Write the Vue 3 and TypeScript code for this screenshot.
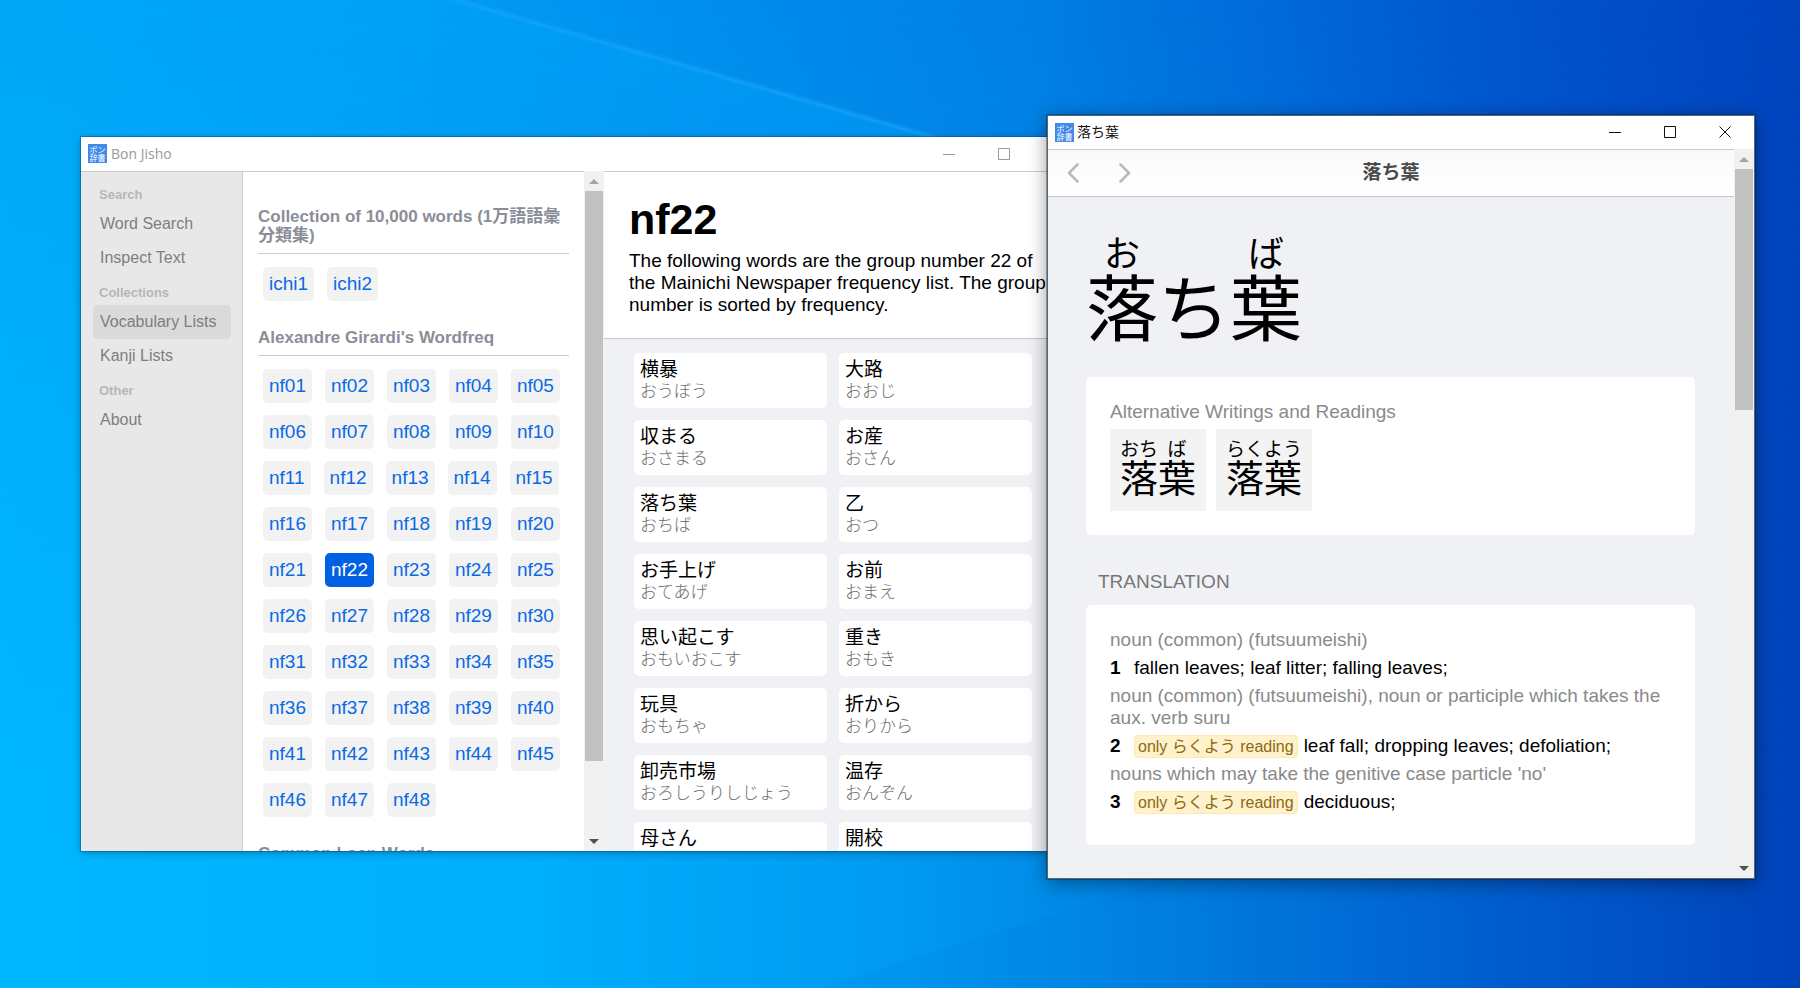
<script setup lang="ts">
import { ref } from 'vue'

interface Word {
  text: string
  reading: string
}
interface RubyPart {
  base: string
  kana?: string
}
interface Sense {
  kind: string
  only?: string
  glosses: string
}

const navGroups = [
  { label: 'Search', items: ['Word Search', 'Inspect Text'] },
  { label: 'Collections', items: ['Vocabulary Lists', 'Kanji Lists'] },
  { label: 'Other', items: ['About'] },
]
const activeNav = ref('Vocabulary Lists')

const lists = [
  { title: 'Collection of 10,000 words (1万語語彙分類集)', keys: ['ichi1', 'ichi2'] },
  {
    title: "Alexandre Girardi's Wordfreq",
    keys: Array.from({ length: 48 }, (_, i) => 'nf' + String(i + 1).padStart(2, '0')),
  },
  { title: 'Common Loan Words', keys: [] },
]
const activeList = ref('nf22')

const words: Word[] = [
  { text: '横暴', reading: 'おうぼう' },
  { text: '大路', reading: 'おおじ' },
  { text: '収まる', reading: 'おさまる' },
  { text: 'お産', reading: 'おさん' },
  { text: '落ち葉', reading: 'おちば' },
  { text: '乙', reading: 'おつ' },
  { text: 'お手上げ', reading: 'おてあげ' },
  { text: 'お前', reading: 'おまえ' },
  { text: '思い起こす', reading: 'おもいおこす' },
  { text: '重き', reading: 'おもき' },
  { text: '玩具', reading: 'おもちゃ' },
  { text: '折から', reading: 'おりから' },
  { text: '卸売市場', reading: 'おろしうりしじょう' },
  { text: '温存', reading: 'おんぞん' },
  { text: '母さん', reading: '' },
  { text: '開校', reading: '' },
]

const headword: RubyPart[] = [{ base: '落', kana: 'お' }, { base: 'ち' }, { base: '葉', kana: 'ば' }]
const alternatives: RubyPart[][] = [
  [{ base: '落', kana: 'おち' }, { base: '葉', kana: 'ば' }],
  [{ base: '落葉', kana: 'らくよう' }],
]
const senses: Sense[] = [
  { kind: 'noun (common) (futsuumeishi)', glosses: 'fallen leaves; leaf litter; falling leaves;' },
  {
    kind: 'noun (common) (futsuumeishi), noun or participle which takes the aux. verb suru',
    only: 'only らくよう reading',
    glosses: 'leaf fall; dropping leaves; defoliation;',
  },
  {
    kind: "nouns which may take the genitive case particle 'no'",
    only: 'only らくよう reading',
    glosses: 'deciduous;',
  },
]
</script>

<template>
  <div class="desktop" lang="ja">
    <svg class="wallpaper" viewBox="0 0 1800 988" preserveAspectRatio="none" aria-hidden="true">
      <defs>
        <linearGradient id="sky" x1="0" y1="0" x2="1" y2="0">
          <stop offset="0" stop-color="#00a8f8" />
          <stop offset="0.2" stop-color="#00a0f6" />
          <stop offset="0.42" stop-color="#008cec" />
          <stop offset="0.58" stop-color="#007ee4" />
          <stop offset="0.72" stop-color="#0068d8" />
          <stop offset="0.84" stop-color="#0054cd" />
          <stop offset="1" stop-color="#0044bf" />
        </linearGradient>
        <linearGradient id="low" x1="0" y1="0" x2="1" y2="0">
          <stop offset="0" stop-color="#00b7ff" />
          <stop offset="0.3" stop-color="#00aefc" />
          <stop offset="0.5" stop-color="#009af0" />
          <stop offset="0.66" stop-color="#007ee0" />
          <stop offset="0.82" stop-color="#005fd0" />
          <stop offset="1" stop-color="#0043ba" />
        </linearGradient>
        <linearGradient id="fade" x1="0" y1="0" x2="0" y2="1">
          <stop offset="0" stop-color="#000" />
          <stop offset="0.85" stop-color="#fff" />
        </linearGradient>
        <linearGradient id="beam" gradientUnits="userSpaceOnUse" x1="700" y1="70" x2="660" y2="210">
          <stop offset="0" stop-color="#0af" stop-opacity="0.3" />
          <stop offset="1" stop-color="#0af" stop-opacity="0" />
        </linearGradient>
        <mask id="lower"><rect width="1800" height="988" fill="url(#fade)" /></mask>
      </defs>
      <rect width="1800" height="988" fill="url(#sky)" />
      <rect width="1800" height="988" fill="url(#low)" mask="url(#lower)" />
      <path d="M455 0 L945 140 L945 300 L0 300 L0 0 Z" fill="url(#beam)" />
      <path d="M450 -2 L950 142" stroke="#1aa8ff" stroke-opacity="0.2" stroke-width="7" />
      <path d="M450 -2 L950 142" stroke="#2ab0ff" stroke-opacity="0.25" stroke-width="3" />
      <path d="M1170 878 L820 988 L1500 988 L1500 878 Z" fill="#0060c8" fill-opacity="0.08" />
    </svg>

    <section class="window main-window" aria-label="Bon Jisho">
      <header class="titlebar inactive">
        <svg class="logo" viewBox="0 0 19 19" aria-hidden="true">
          <rect width="19" height="19" fill="#4189e8" />
          <text x="9.5" y="8.5" text-anchor="middle">ポン</text>
          <text x="9.5" y="16.5" text-anchor="middle">辞書</text>
        </svg>
        <span class="caption">Bon Jisho</span>
        <div class="controls">
          <button type="button" aria-label="Minimize"><svg viewBox="0 0 12 12"><path d="M0 6.5H12" /></svg></button>
          <button type="button" aria-label="Maximize"><svg viewBox="0 0 12 12"><path d="M.5 .5H11.5V11.5H.5Z" /></svg></button>
          <button type="button" aria-label="Close"><svg viewBox="0 0 12 12"><path d="M.5 .5L11.5 11.5M11.5 .5L.5 11.5" /></svg></button>
        </div>
      </header>
      <div class="panes">
        <nav class="sidebar">
          <template v-for="group in navGroups" :key="group.label">
            <h3>{{ group.label }}</h3>
            <button
              v-for="item in group.items"
              :key="item"
              type="button"
              :class="{ active: item === activeNav }"
              @click="activeNav = item"
            >{{ item }}</button>
          </template>
        </nav>

        <div class="list-pane">
          <section v-for="list in lists" :key="list.title">
            <h2>{{ list.title }}</h2>
            <div class="chips">
              <button
                v-for="key in list.keys"
                :key="key"
                type="button"
                :class="{ active: key === activeList }"
                @click="activeList = key"
              >{{ key }}</button>
            </div>
          </section>
        </div>

        <div class="scrollbar" aria-hidden="true">
          <svg class="arrow up" viewBox="0 0 10 5"><path d="M0 5L5 0L10 5Z" /></svg>
          <div class="track"><div class="thumb list-thumb"></div></div>
          <svg class="arrow down" viewBox="0 0 10 5"><path d="M0 0L5 5L10 0Z" /></svg>
        </div>

        <div class="word-pane">
          <header class="list-head">
            <h1>{{ activeList }}</h1>
            <p>The following words are the group number 22 of the Mainichi Newspaper frequency list. The group number is sorted by frequency.</p>
          </header>
          <div class="cards">
            <a v-for="word in words" :key="word.text" href="#" class="card">
              <span class="writing">{{ word.text }}</span>
              <span class="reading">{{ word.reading }}</span>
            </a>
          </div>
        </div>
      </div>
    </section>

    <section class="window entry-window" aria-label="落ち葉">
      <header class="titlebar">
        <svg class="logo" viewBox="0 0 19 19" aria-hidden="true">
          <rect width="19" height="19" fill="#4189e8" />
          <text x="9.5" y="8.5" text-anchor="middle">ポン</text>
          <text x="9.5" y="16.5" text-anchor="middle">辞書</text>
        </svg>
        <span class="caption">落ち葉</span>
        <div class="controls">
          <button type="button" aria-label="Minimize"><svg viewBox="0 0 12 12"><path d="M0 6.5H12" /></svg></button>
          <button type="button" aria-label="Maximize"><svg viewBox="0 0 12 12"><path d="M.5 .5H11.5V11.5H.5Z" /></svg></button>
          <button type="button" aria-label="Close"><svg viewBox="0 0 12 12"><path d="M.5 .5L11.5 11.5M11.5 .5L.5 11.5" /></svg></button>
        </div>
      </header>
      <div class="panes">
        <div class="entry-pane">
          <div class="toolbar">
            <div class="history">
              <button type="button" aria-label="Back"><svg viewBox="0 0 12 20"><path d="M10.5 1.5L2 10L10.5 18.5" /></svg></button>
              <button type="button" aria-label="Forward"><svg viewBox="0 0 12 20"><path d="M1.5 1.5L10 10L1.5 18.5" /></svg></button>
            </div>
            <strong>落ち葉</strong>
          </div>
          <article>
            <h1 class="headword">
              <ruby v-for="part in headword" :key="part.base">{{ part.base }}<rt v-if="part.kana">{{ part.kana }}</rt></ruby>
            </h1>
            <section class="panel">
              <h2>Alternative Writings and Readings</h2>
              <div class="alternatives">
                <span v-for="(alt, i) in alternatives" :key="i" class="alternative">
                  <ruby v-for="part in alt" :key="part.base">{{ part.base }}<rt>{{ part.kana }}</rt></ruby>
                </span>
              </div>
            </section>
            <h2 class="section-title">TRANSLATION</h2>
            <section class="panel senses">
              <template v-for="(sense, i) in senses" :key="i">
                <p class="kind">{{ sense.kind }}</p>
                <div class="sense">
                  <b>{{ i + 1 }}</b>
                  <span v-if="sense.only" class="badge">{{ sense.only }}</span>
                  <span>{{ sense.glosses }}</span>
                </div>
              </template>
            </section>
          </article>
        </div>
        <div class="scrollbar" aria-hidden="true">
          <svg class="arrow up" viewBox="0 0 10 5"><path d="M0 5L5 0L10 5Z" /></svg>
          <div class="track"><div class="thumb entry-thumb"></div></div>
          <svg class="arrow down" viewBox="0 0 10 5"><path d="M0 0L5 5L10 0Z" /></svg>
        </div>
      </div>
    </section>
  </div>
</template>

<style>
body {
  margin: 0;
}
</style>

<style scoped>
* {
  box-sizing: border-box;
}
h1, h2, h3, p {
  margin: 0;
  font-weight: 400;
}
button {
  margin: 0;
  padding: 0;
  border: 0;
  background: none;
  font: inherit;
  color: inherit;
  cursor: pointer;
}
.desktop {
  position: relative;
  height: 100vh;
  overflow: hidden;
  background: #0090ee;
  font-family: 'Liberation Sans', 'Noto Sans CJK JP', sans-serif;
  font-size: 19px;
  line-height: 22px;
  color: #000;
}
.wallpaper {
  position: absolute;
  inset: 0;
  width: 100%;
  height: 100%;
}
.window {
  position: absolute;
  display: flex;
  flex-direction: column;
  background: #fff;
}
.main-window {
  inset: 137px 712px 137px 81px;
  box-shadow: 0 0 0 1px rgba(0, 60, 110, 0.35), 0 2px 8px rgba(0, 0, 0, 0.3);
}
.entry-window {
  inset: 115px 45px 109px 1047px;
  border: 1px solid #5c6673;
  box-shadow: 0 0 0 1px rgba(0, 20, 50, 0.35), 0 4px 18px rgba(0, 0, 0, 0.4);
}
.titlebar {
  display: flex;
  align-items: center;
  height: 33px;
  flex: none;
  padding: 0 2px 1px 7px;
  gap: 3px;
  font-family: 'Open Sans', 'Noto Sans CJK JP', sans-serif;
  font-size: 14px;
  line-height: 20px;
  color: #111;
}
.titlebar.inactive {
  height: 34px;
  gap: 4px;
  color: #999;
}
.logo {
  width: 19px;
  height: 19px;
  flex: none;
}
.logo text {
  font-family: 'Noto Sans CJK JP', sans-serif;
  font-size: 8px;
  fill: #fff;
}
.controls {
  display: flex;
  align-self: stretch;
  margin-left: auto;
}
.controls button {
  display: grid;
  place-items: center;
  width: 55px;
}
.controls svg {
  width: 12px;
  height: 12px;
  fill: none;
  stroke: currentColor;
}
.panes {
  display: flex;
  flex: 1;
  min-height: 0;
  overflow: hidden;
}
.sidebar {
  display: flex;
  flex-direction: column;
  flex: none;
  width: 162px;
  padding: 5px 11px 0 12px;
  border-top: 1px solid #ccc;
  border-right: 1px solid #ccc;
  background: #e8e8e8;
}
.sidebar h3 {
  padding: 10px 6px 4px;
  font-size: 13px;
  font-weight: 700;
  line-height: 16px;
  color: #b7b7b7;
}
.sidebar button {
  height: 34px;
  flex: none;
  padding: 0 7px;
  border-radius: 5px;
  font-size: 16px;
  text-align: left;
  white-space: nowrap;
  color: #7e7e7e;
}
.sidebar button.active {
  background: #dadada;
}
.list-pane {
  width: 341px;
  flex: none;
  padding: 35px 15px 0;
  border-top: 1px solid #ccc;
  overflow: hidden;
}
.list-pane h2 {
  padding-bottom: 8px;
  border-bottom: 1px solid #ccc;
  font-size: 17px;
  font-weight: 700;
  line-height: 19px;
  color: #8b8d98;
}
.chips {
  display: flex;
  flex-wrap: wrap;
  gap: 12px 13px;
  padding: 13px 0 27px 5px;
}
.chips button {
  height: 34px;
  padding: 0 6px;
  border-radius: 5px;
  background: #f2f2f2;
  color: #0a6ae6;
}
.chips button.active {
  background: #0062e3;
  color: #fff;
}
.scrollbar {
  display: flex;
  flex-direction: column;
  align-items: center;
  flex: none;
  width: 20px;
  background: #f1f1f1;
}
.arrow {
  width: 10px;
  height: 5px;
  flex: none;
  margin: 8px 0 7px;
}
.arrow.up {
  fill: #a3a3a3;
}
.arrow.down {
  fill: #505050;
}
.track {
  flex: 1;
  width: 18px;
}
.thumb {
  background: #c1c1c1;
}
.list-thumb {
  height: 89%;
}
.entry-thumb {
  height: 35%;
}
.word-pane {
  flex: 1;
  min-width: 0;
  border-top: 1px solid #ccc;
  background: #f0f1f5;
}
.list-head {
  padding: 22px 31px 22px 25px;
  border-bottom: 1px solid #c8c9cc;
  background: #fff;
}
.list-head h1 {
  margin-bottom: 6px;
  font-size: 43px;
  font-weight: 700;
  line-height: 50px;
}
.cards {
  display: grid;
  grid-template-columns: 1fr 1fr;
  gap: 12px;
  padding: 14px 56px 0 30px;
}
.card {
  display: flex;
  flex-direction: column;
  height: 55px;
  padding: 5px 6px;
  border-radius: 5px;
  background: #fff;
  text-decoration: none;
  white-space: nowrap;
}
.writing {
  line-height: 24px;
  color: #000;
}
.reading {
  font-size: 17px;
  font-weight: 300;
  line-height: 20px;
  color: #6c6c6c;
}
.entry-pane {
  flex: 1;
  min-width: 0;
  background: #f0f1f5;
}
.toolbar {
  display: grid;
  grid-template-columns: 1fr auto 1fr;
  align-items: center;
  height: 48px;
  border-top: 1px solid #c6c8ca;
  border-bottom: 1px solid #c6c8ca;
  background: linear-gradient(#f8faf9, #fff);
}
.toolbar strong {
  color: #4a4a4a;
}
.history {
  display: flex;
  gap: 40px;
  padding-left: 19px;
}
.history button {
  display: grid;
}
.history svg {
  width: 12px;
  height: 20px;
  fill: none;
  stroke: #b8b9b9;
  stroke-width: 2.5;
  stroke-linecap: round;
  stroke-linejoin: round;
}
article {
  padding: 39px 39px 0 38px;
}
ruby {
  display: inline-flex;
  flex-direction: column-reverse;
  align-items: center;
}
rt {
  display: block;
}
.headword {
  display: flex;
  align-items: flex-end;
  margin-bottom: 31px;
  font-size: 72px;
  line-height: 72px;
}
.headword ruby {
  justify-content: flex-start;
}
.headword rt {
  font-size: 36px;
  line-height: 38px;
}
.panel {
  padding: 24px;
  border-radius: 5px;
  background: #fff;
}
.panel h2 {
  margin-bottom: 6px;
  font-size: 19px;
  color: #8a8a8a;
}
.alternatives {
  display: flex;
  gap: 10px;
}
.alternative {
  display: flex;
  padding: 11px 10px 13px;
  background: #f3f3f3;
  font-size: 38px;
  line-height: 38px;
}
.alternative rt {
  font-size: 19px;
  line-height: 20px;
}
.section-title {
  padding: 36px 12px 12px;
  font-size: 19px;
  color: #777;
}
.senses {
  display: flex;
  flex-direction: column;
  gap: 6px;
  padding-bottom: 32px;
}
.kind {
  color: #8a8a8a;
}
.sense {
  display: flex;
  align-items: center;
  gap: 6px;
  height: 22px;
}
.sense b {
  width: 18px;
}
.badge {
  height: 23px;
  padding: 0 3px;
  border: 1px solid #ffe8a8;
  border-radius: 4px;
  background: #fff1cb;
  font-size: 16px;
  line-height: 21px;
  color: #8a6a12;
}
</style>
